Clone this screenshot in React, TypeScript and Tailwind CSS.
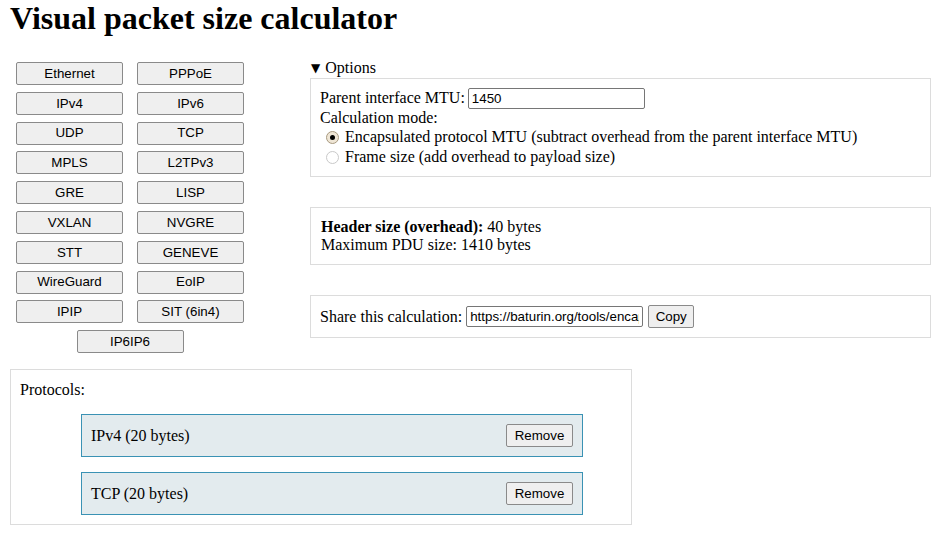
import { useState } from "react";

// ── Protocol catalogue ─────────────────────────────────────────────────────

const PROTOCOLS = [
  "Ethernet",
  "PPPoE",
  "IPv4",
  "IPv6",
  "UDP",
  "TCP",
  "MPLS",
  "L2TPv3",
  "GRE",
  "LISP",
  "VXLAN",
  "NVGRE",
  "STT",
  "GENEVE",
  "WireGuard",
  "EoIP",
  "IPIP",
  "SIT (6in4)",
  "IP6IP6",
];

const STACK = [
  { name: "IPv4", size: 20 },
  { name: "TCP", size: 20 },
];

const SHARE_URL = "https://baturin.org/tools/encapcalc/#IPv4,TCP;mtu=1450;mode=mtu";

// ── Small form controls ────────────────────────────────────────────────────

function PlainButton({ label, className = "" }: { label: string; className?: string }) {
  return (
    <button
      className={`h-[23px] bg-[#efefef] border border-[#8a8a8a] rounded-[2px] font-['Liberation_Sans',Arial,sans-serif] text-[13.333px] text-black leading-none ${className}`}
    >
      {label}
    </button>
  );
}

function Radio({ checked }: { checked?: boolean }) {
  return (
    <span
      className={`ml-[6px] w-[13px] h-[13px] rounded-full border flex items-center justify-center shrink-0 ${
        checked ? "border-[#a89a80] bg-[#efe6d6]" : "border-[#c9c9c9] bg-white"
      }`}
    >
      {checked && <span className="w-[5px] h-[5px] rounded-full bg-black" />}
    </span>
  );
}

// ── Page ───────────────────────────────────────────────────────────────────

export default function App() {
  const [mtu] = useState("1450");

  return (
    <div className="min-h-[539px] bg-white px-[10px] font-['Liberation_Serif','Times_New_Roman',serif] text-[16px] text-black">
      <h1 className="text-[32px] font-bold leading-[37px] mb-[22px]">Visual packet size calculator</h1>

      <div className="flex">
        {/* Protocol buttons */}
        <div className="w-[300px] shrink-0 pt-[3px]">
          <div className="ml-[6px] grid grid-cols-[107px_107px] gap-x-[14px] gap-y-[6.8px]">
            {PROTOCOLS.map((p, i) => (
              <PlainButton
                key={p}
                label={p}
                className={
                  i === PROTOCOLS.length - 1 ? "col-span-2 justify-self-center w-[107px]" : "w-[107px]"
                }
              />
            ))}
          </div>
        </div>

        {/* Options and results */}
        <div className="flex-1">
          <div className="h-[18px] leading-[18px] pl-[1px] flex items-center gap-[5px]">
            <span className="text-[12px] font-['DejaVu_Sans',sans-serif]">▼</span>
            <span>Options</span>
          </div>
          <div className="mt-[1px] border border-[#dcdcdc] px-[9px] pt-[9px] pb-[9px]">
            <div className="flex items-center gap-[3px] h-[20px]">
              <span>Parent interface MTU:</span>
              <input
                readOnly
                value={mtu}
                className="w-[177px] h-[21px] border border-[#767676] rounded-[2px] px-[3px] font-['Liberation_Sans',Arial,sans-serif] text-[13.333px] outline-none"
              />
            </div>
            <div className="leading-[19px]">Calculation mode:</div>
            <div className="flex items-center gap-[6px] h-[20px]">
              <Radio checked />
              <span>Encapsulated protocol MTU (subtract overhead from the parent interface MTU)</span>
            </div>
            <div className="flex items-center gap-[6px] h-[20px]">
              <Radio />
              <span>Frame size (add overhead to payload size)</span>
            </div>
          </div>

          <div className="mt-[30px] border border-[#dcdcdc] p-[10px] leading-[18px]">
            <div>
              <b>Header size (overhead):</b> 40 bytes
            </div>
            <div>Maximum PDU size: 1410 bytes</div>
          </div>

          <div className="mt-[30px] border border-[#dcdcdc] px-[9px] py-[10px]">
            <div className="flex items-center h-[21px]">
              <span>Share this calculation:</span>
              <input
                readOnly
                value={SHARE_URL}
                className="ml-[4px] w-[177px] h-[21px] border border-[#767676] rounded-[2px] px-[3px] font-['Liberation_Sans',Arial,sans-serif] text-[13.333px] outline-none"
              />
              <PlainButton label="Copy" className="ml-[5px] w-[46px]" />
            </div>
          </div>
        </div>
      </div>

      {/* Current protocol stack */}
      <div className="mt-[16px] w-[622px] border border-[#dcdcdc] px-[9px] pt-[10px] pb-[9px]">
        <div className="leading-[19px]">Protocols:</div>
        <div className="mt-[15px] ml-[61px] w-[502px] flex flex-col gap-[15px]">
          {STACK.map((s) => (
            <div
              key={s.name}
              className="h-[43px] border border-[#3a92b4] bg-[#e3ebee] pl-[9px] pr-[9px] flex items-center justify-between"
            >
              <span>
                {s.name} ({s.size} bytes)
              </span>
              <PlainButton label="Remove" className="w-[67px] h-[22px]" />
            </div>
          ))}
        </div>
      </div>
    </div>
  );
}
